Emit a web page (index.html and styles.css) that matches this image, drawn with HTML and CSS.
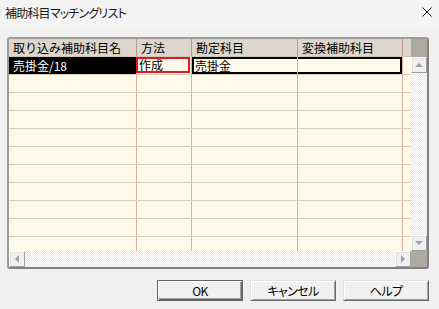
FILE: index.html
```html
<!DOCTYPE html>
<html lang="ja">
<head>
<meta charset="utf-8">
<title>補助科目マッチングリスト</title>
<link rel="stylesheet" href="styles.css">
</head>
<body>
<div class="titlebar">
  <span class="title">補助科目マッチングリスト</span>
  <svg class="close" width="10" height="10" viewBox="0 0 10 10"><path d="M0.5 0.5L9.5 9.5M9.5 0.5L0.5 9.5" stroke="#1a1a1a" stroke-width="1" fill="none"/></svg>
</div>
<div class="main">
  <div class="grid">
    <div class="cells">
      <div class="hdr">
        <div class="c">取り込み補助科目名</div>
        <div class="c">方法</div>
        <div class="c">勘定科目</div>
        <div class="c">変換補助科目</div>
        <div class="c"></div>
      </div>
      <div class="row">
        <div class="c sel">売掛金/18</div>
        <div class="c editcell"><div class="edit">作成</div></div>
        <div class="focus"><div class="ring"><div class="c">売掛金</div><div class="c"></div></div></div>
        <div class="c"></div>
      </div>
      <div class="row"><div class="c"></div><div class="c"></div><div class="c"></div><div class="c"></div><div class="c"></div></div>
      <div class="row"><div class="c"></div><div class="c"></div><div class="c"></div><div class="c"></div><div class="c"></div></div>
      <div class="row"><div class="c"></div><div class="c"></div><div class="c"></div><div class="c"></div><div class="c"></div></div>
      <div class="row"><div class="c"></div><div class="c"></div><div class="c"></div><div class="c"></div><div class="c"></div></div>
      <div class="row"><div class="c"></div><div class="c"></div><div class="c"></div><div class="c"></div><div class="c"></div></div>
      <div class="row"><div class="c"></div><div class="c"></div><div class="c"></div><div class="c"></div><div class="c"></div></div>
      <div class="row"><div class="c"></div><div class="c"></div><div class="c"></div><div class="c"></div><div class="c"></div></div>
      <div class="row"><div class="c"></div><div class="c"></div><div class="c"></div><div class="c"></div><div class="c"></div></div>
      <div class="row"><div class="c"></div><div class="c"></div><div class="c"></div><div class="c"></div><div class="c"></div></div>
      <div class="row"><div class="c"></div><div class="c"></div><div class="c"></div><div class="c"></div><div class="c"></div></div>
    </div>
    <div class="vs">
      <div class="vs-top"></div>
      <div class="sb"><i class="ar up"></i></div>
      <div class="track"></div>
      <div class="sb"><i class="ar down"></i></div>
    </div>
    <div class="hs">
      <div class="sb"><i class="ar left"></i></div>
      <div class="track"></div>
      <div class="sb"><i class="ar right"></i></div>
    </div>
    <div class="corner"></div>
  </div>
  <div class="buttons">
    <button class="btn def">OK</button>
    <button class="btn">キャンセル</button>
    <button class="btn">ヘルプ</button>
  </div>
</div>
</body>
</html>
```
FILE: styles.css
```css
* { box-sizing: border-box; }
html, body { margin: 0; padding: 0; }
body {
  width: 439px;
  height: 309px;
  overflow: hidden;
  background: #f0f0f0;
  font-family: "Noto Sans CJK JP", "Noto Sans", sans-serif;
  font-size: 12px;
  color: #000;
}
.titlebar {
  height: 27px;
  display: flex;
  align-items: center;
  justify-content: space-between;
  padding: 0 7px 0 5px;
  background: #f3f3f3;
}
.title {
  font-size: 12px;
  line-height: 14px;
  font-feature-settings: "palt";
  letter-spacing: -0.8px;
  color: #1a1a1a;
  margin-top: -1px;
}
.close { display: block; margin-top: -4px; }
.main { padding: 10px 0 0 7px; }
.grid {
  width: 422px;
  height: 232px;
  border: 2px solid;
  border-color: #9c9c9c #808080 #808080 #9c9c9c;
  border-radius: 3px;
  display: grid;
  grid-template-columns: 402px 16px;
  grid-template-rows: 212px 16px;
  background: #fefaea;
}
.cells { overflow: hidden; background: #fefaea; }
.hdr, .row {
  display: grid;
  grid-template-columns: 128px 55px 106px 105px 8px;
  height: 18px;
}
.hdr { background: #ddd6cc; border-bottom: 1px solid #cfc6b8; }
.row { border-bottom: 1px solid #d6ccb8; }
.c {
  border-right: 1px solid #e4aa9e;
  padding-left: 4px;
  line-height: 17px;
  white-space: nowrap;
  overflow: hidden;
}
.hdr .c { border-right-color: #c4978c; }
.hdr .c:last-child, .row .c:last-child { border-right: 0; }
.sel { background: #000; color: #fff; }
.editcell { padding-left: 0; overflow: visible; }
.edit {
  width: 54px;
  height: 16px;
  margin-left: -1px;
  border: 2px solid #e8141e;
  background: #fffbee;
  padding-left: 1px;
  line-height: 12px;
}
.focus {
  grid-column: span 2;
  border-right: 1px solid #e4aa9e;
}
.ring {
  height: 17px;
  display: grid;
  grid-template-columns: 106px 104px;
  box-shadow: inset 0 0 0 2px #000;
}
.ring .c { padding-left: 3px; }
.ring .c:last-child { border-right: 0; }
.vs { display: flex; flex-direction: column; }
.vs-top { height: 18px; background: #aeaaa2; }
.hs { display: flex; }
.track {
  flex: 1;
  background-color: #fff;
  background-image: repeating-conic-gradient(#e9e7e3 0 25%, #fff 0 50%);
  background-size: 2px 2px;
}
.sb {
  width: 16px;
  height: 16px;
  background: #f0f0f0;
  border: 1px solid;
  border-color: #fff #a0a0a0 #a0a0a0 #fff;
  box-shadow: 1px 1px 0 #e3e3e3 inset;
  display: flex;
  align-items: center;
  justify-content: center;
}
.corner { background: #aeaaa2; }
.ar { display: block; width: 0; height: 0; }
.ar.up { border-left: 4px solid transparent; border-right: 4px solid transparent; border-bottom: 4px solid #a0a0a0; }
.ar.down { border-left: 4px solid transparent; border-right: 4px solid transparent; border-top: 4px solid #a0a0a0; }
.ar.left { border-top: 4px solid transparent; border-bottom: 4px solid transparent; border-right: 4px solid #a0a0a0; }
.ar.right { border-top: 4px solid transparent; border-bottom: 4px solid transparent; border-left: 4px solid #a0a0a0; }
.buttons {
  display: flex;
  justify-content: flex-end;
  gap: 7px;
  padding-right: 10px;
  margin-top: 11px;
}
.btn {
  width: 86px;
  height: 21px;
  padding: 0;
  margin: 0;
  background: #f0f0f0;
  border: 1px solid;
  border-color: #e3e3e3 #696969 #696969 #e3e3e3;
  box-shadow: inset 1px 1px 0 #fff, inset -1px -1px 0 #a0a0a0;
  font-family: "Noto Sans CJK JP", "Noto Sans", sans-serif;
  font-size: 12px;
  font-feature-settings: "palt";
  letter-spacing: -0.6px;
  line-height: 17px;
  color: #000;
}
.btn.def {
  border-color: #646464;
  box-shadow: inset 1px 1px 0 #fff, inset -1px -1px 0 #696969, inset -2px -2px 0 #a0a0a0;
}
```
